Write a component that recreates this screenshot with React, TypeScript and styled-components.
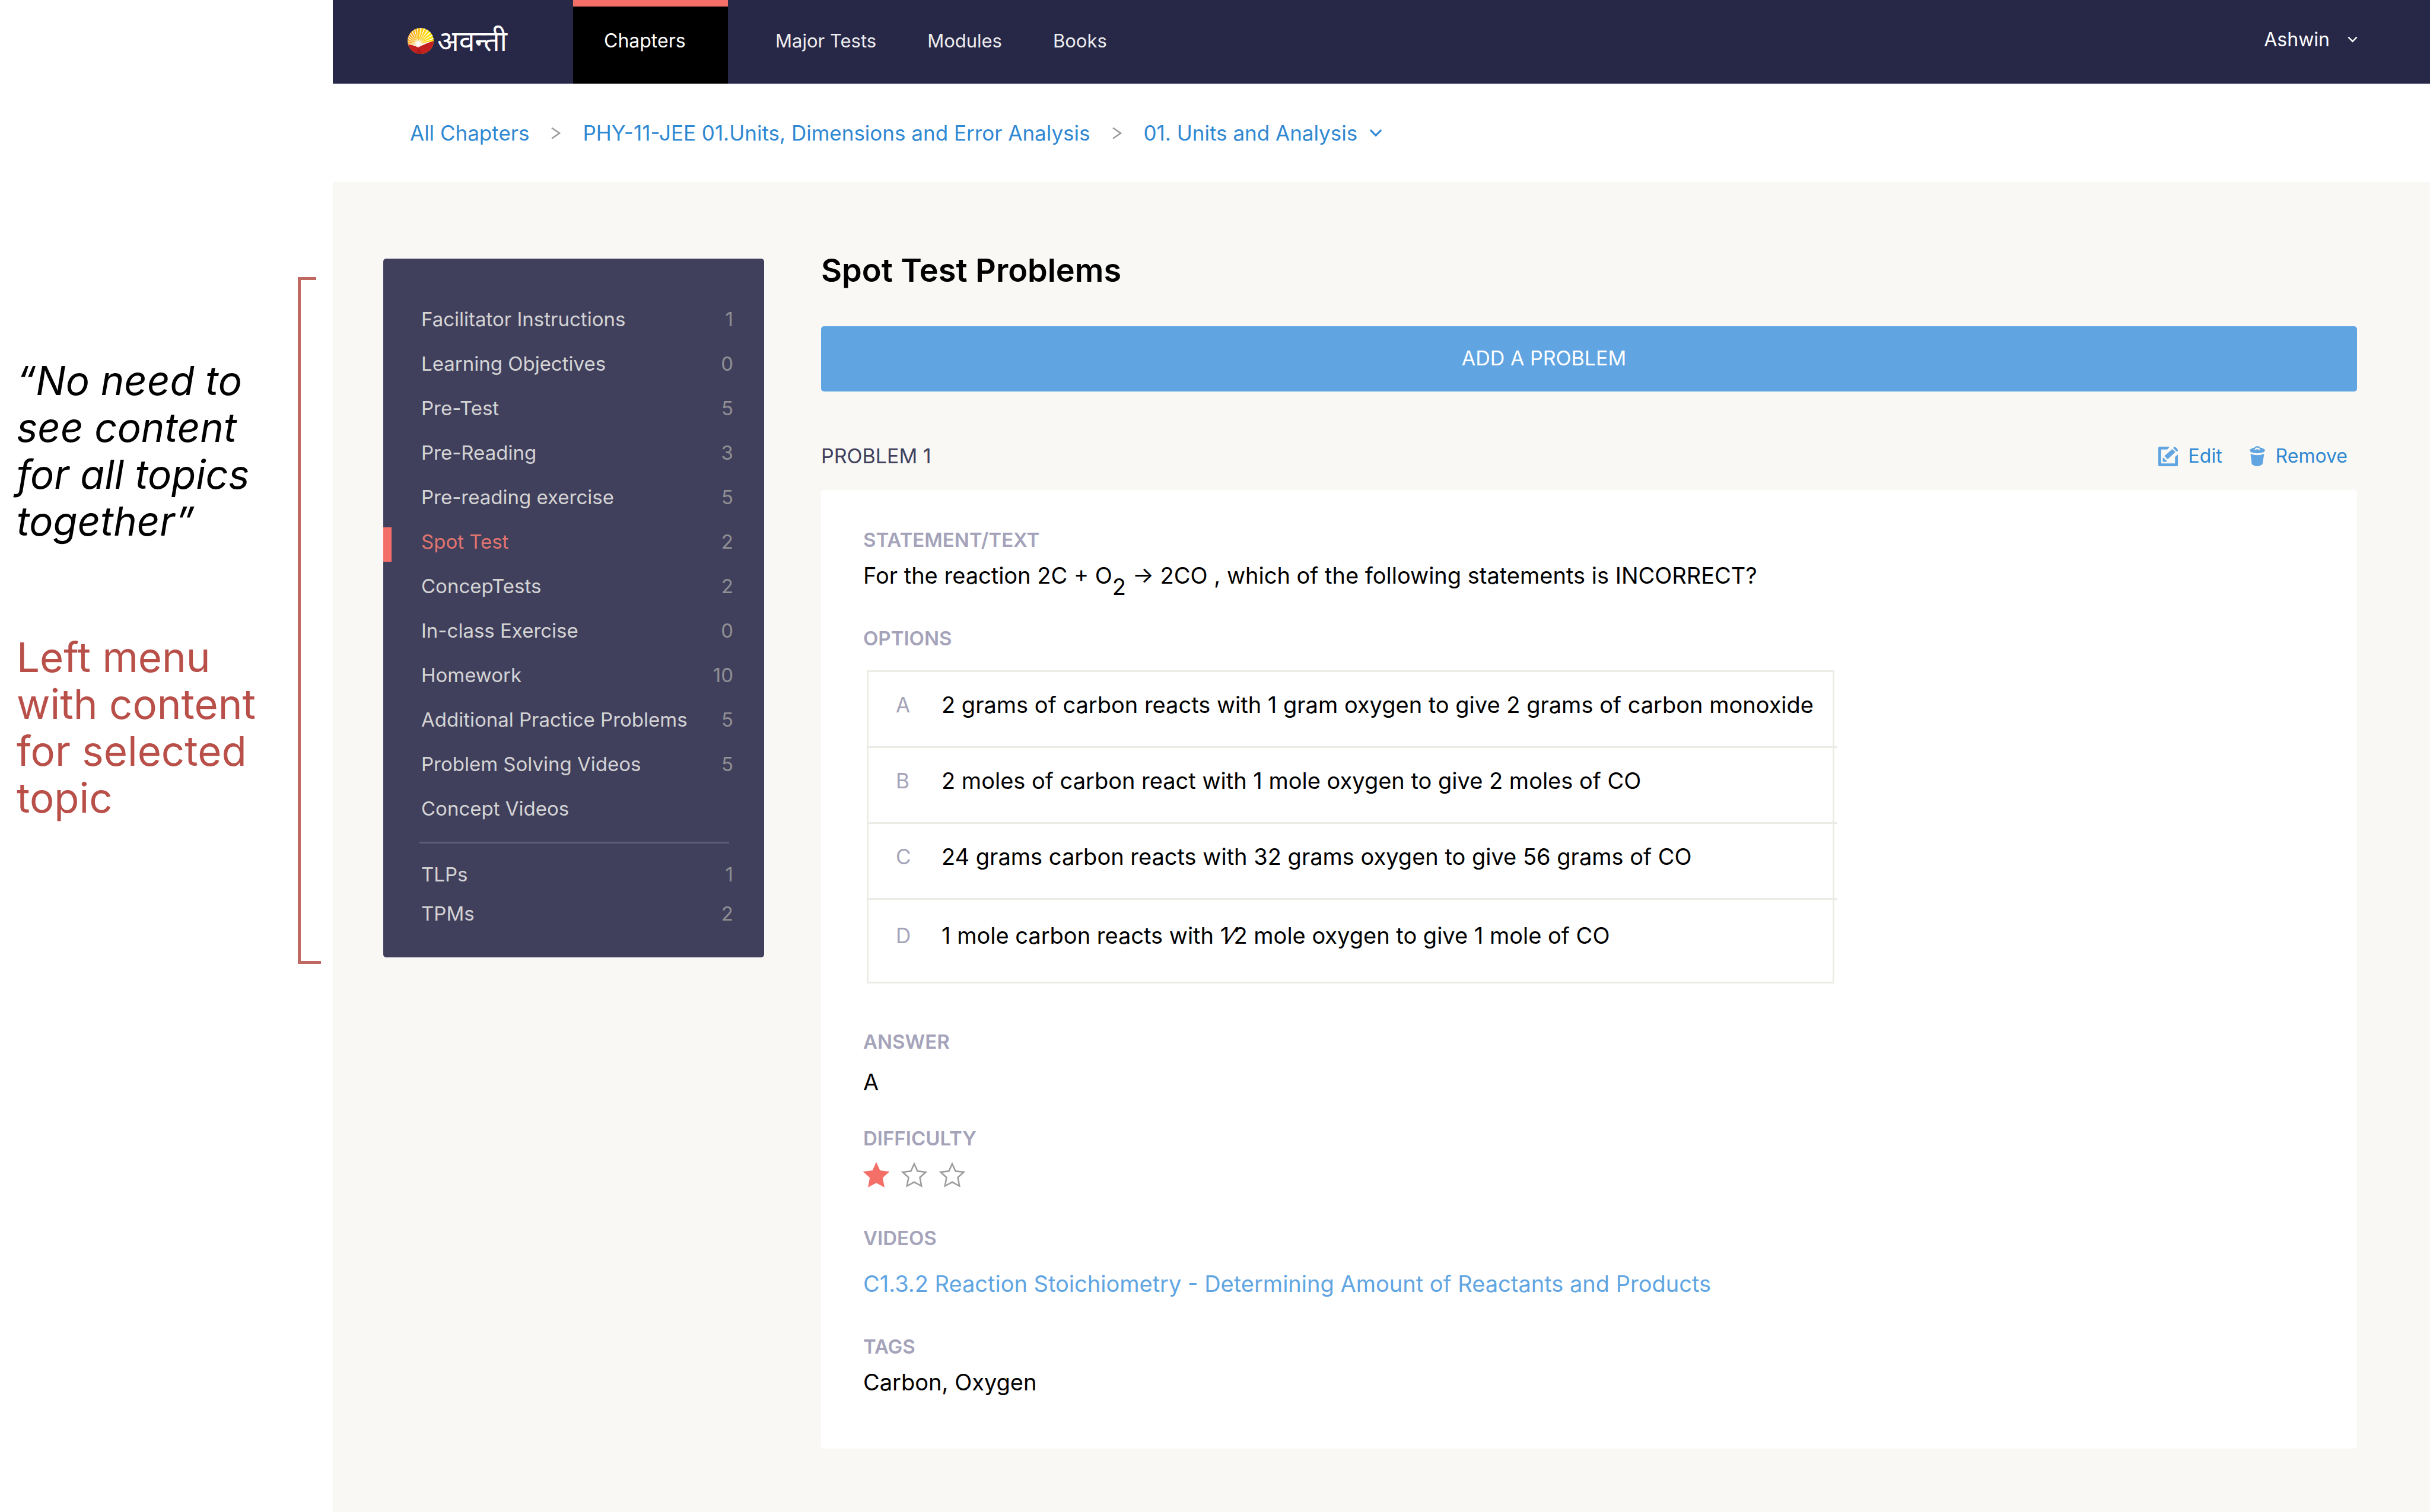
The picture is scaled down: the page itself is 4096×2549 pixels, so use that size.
import React from "react";
import styled, { createGlobalStyle, css } from "styled-components";

const color = {
  navy: "#272748",
  panel: "#40405d",
  canvas: "#f9f8f4",
  coral: "#f56f69",
  link: "#2f88d2",
  sky: "#60a5e2",
  label: "#a4a3ba",
  line: "#ecece7",
  note: "#b94f49",
  bracket: "#c16762",
};

const GlobalStyle = createGlobalStyle`
  *, *::before, *::after { box-sizing: border-box; }
  body {
    margin: 0;
    background: #fff;
    color: #000;
    font-family: Inter, "Noto Sans", sans-serif;
    font-size: 38px;
    line-height: 48px;
  }
  h1, h2, h3, p, ul, ol, dl, dd { margin: 0; padding: 0; }
  ul, ol { list-style: none; }
  a { color: inherit; text-decoration: none; }
  button {
    margin: 0;
    padding: 0;
    border: 0;
    background: none;
    color: inherit;
    font: inherit;
    cursor: pointer;
  }
  svg { display: block; flex: none; }
`;

const Page = styled.div`
  display: grid;
  grid-template-columns: 561px minmax(0, 1fr);
  min-height: 100vh;
`;

/* Annotations beside the screen */

const Notes = styled.aside`
  display: flex;
  justify-content: space-between;
  align-items: flex-start;
  padding: 467px 20px 0 28px;
`;

const NoteText = styled.div`
  display: flex;
  flex-direction: column;
  gap: 151px;
  width: 440px;
  padding-top: 135px;
  font-size: 69px;
  line-height: 79px;
`;

const Quote = styled.p`
  font-size: 67px;
  font-style: italic;
`;

const Remark = styled.p`
  color: ${color.note};
`;

const Bracket = styled.div`
  width: 39px;
  height: 1158px;
  border: solid ${color.bracket};
  border-width: 0 0 5px 5px;

  &::before {
    content: "";
    display: block;
    width: 26px;
    height: 5px;
    background: ${color.bracket};
  }
`;

/* Top bar */

const Screen = styled.div`
  display: flex;
  flex-direction: column;
  background: ${color.canvas};
`;

const TopBar = styled.header`
  display: flex;
  height: 141px;
  padding: 0 122px 0 126px;
  background: ${color.navy};
  color: #fff;
  font-size: 32px;
`;

const Brand = styled.a`
  display: flex;
  align-items: center;
  gap: 6px;
  width: 279px;
  padding-bottom: 4px;
`;

const BrandName = styled.span`
  font-size: 48px;
  line-height: 64px;
`;

const Nav = styled.nav`
  display: flex;
`;

const NavLinks = styled.div`
  display: flex;
  gap: 86px;
  padding-left: 80px;
`;

const NavLink = styled.a<{ $active?: boolean }>`
  display: flex;
  align-items: center;
  padding-bottom: 4px;
  font-size: 31px;
  color: #eeeeee;
  ${(p) =>
    p.$active &&
    css`
      width: 261px;
      padding: 0 0 15px 52px;
      border-top: 11px solid ${color.coral};
      background: #000;
      color: #fff;
      font-size: 32px;
    `}
`;

const UserMenu = styled.button`
  display: flex;
  align-items: center;
  gap: 30px;
  margin-left: auto;
  padding-bottom: 8px;
`;

/* Breadcrumb */

const Crumbs = styled.nav`
  display: flex;
  align-items: center;
  gap: 37px;
  height: 166px;
  padding: 0 130px;
  background: #fff;
  color: ${color.link};
  font-size: 35px;
`;

const CrumbMenu = styled.button`
  display: flex;
  align-items: center;
  gap: 20px;
`;

/* Side menu */

const Body = styled.div`
  display: flex;
  align-items: flex-start;
  gap: 96px;
  padding: 129px 123px 107px 85px;
`;

const Menu = styled.nav`
  flex: none;
  width: 642px;
  padding: 64px 0 41px;
  border-radius: 5px;
  background: ${color.panel};
  color: #d5d4d4;
  font-size: 33px;
`;

const MenuDivider = styled.hr`
  height: 3px;
  margin: 19px 59px 19px 61px;
  border: 0;
  background: #5d5c7b;
`;

const MenuLink = styled.a<{ $active?: boolean; $compact?: boolean }>`
  position: relative;
  display: flex;
  justify-content: space-between;
  align-items: center;
  height: ${(p) => (p.$compact ? 66 : 75)}px;
  padding: 0 52px 0 64px;
  ${(p) =>
    p.$active &&
    css`
      color: #e2756f;

      &::before {
        content: "";
        position: absolute;
        left: 0;
        bottom: 3px;
        width: 14px;
        height: 58px;
        background: ${color.coral};
      }
    `}
`;

const Count = styled.span`
  color: #908f92;
`;

/* Problem area */

const Main = styled.main`
  flex: 1;
  min-width: 0;
`;

const Title = styled.h1`
  height: 114px;
  padding-bottom: 74px;
  font-size: 54px;
  font-weight: 600;
  line-height: 40px;
`;

const AddButton = styled.button`
  width: 100%;
  height: 110px;
  padding: 0 152px 2px 0;
  border-radius: 5px;
  background: ${color.sky};
  color: #fff;
  font-size: 34px;
`;

const ProblemHead = styled.div`
  display: flex;
  justify-content: space-between;
  align-items: center;
  height: 166px;
  padding: 52px 16px 0 0;
`;

const ProblemTitle = styled.h2`
  color: ${color.panel};
  font-size: 34px;
  font-weight: 400;
`;

const Actions = styled.div`
  display: flex;
  gap: 46px;
`;

const Action = styled.button`
  display: flex;
  align-items: center;
  gap: 18px;
  color: ${color.link};
  font-size: 32px;
`;

const Card = styled.article`
  padding: 64px 71px 88px;
  border-radius: 5px;
  background: #fff;
`;

const Field = styled.section<{ $gap: number; $after?: number }>`
  display: flex;
  flex-direction: column;
  align-items: flex-start;
  gap: ${(p) => p.$gap}px;
  margin-bottom: ${(p) => p.$after ?? 0}px;
`;

const Label = styled.h3`
  color: ${color.label};
  font-size: 33px;
  font-weight: 600;
  line-height: 40px;
`;

const Value = styled.p`
  line-height: 48px;
`;

const Subscript = styled.sub`
  font-size: 1em;
  line-height: 0;
  vertical-align: -19px;
`;

const VideoLink = styled.a`
  color: ${color.sky};
`;

const Options = styled.table`
  margin-left: 6px;
  border: 3px solid ${color.line};
  border-spacing: 0;
`;

const OptionRow = styled.tr`
  th,
  td {
    position: relative;
    height: 128px;
    padding: 31px 32px 0 0;
    border-bottom: 3px solid ${color.line};
    text-align: left;
    vertical-align: top;
  }
  td::after {
    content: "";
    position: absolute;
    right: -8px;
    bottom: -3px;
    width: 8px;
    height: 3px;
    background: ${color.line};
  }
  &:last-child th,
  &:last-child td {
    height: 138px;
    padding-top: 36px;
    border-bottom: 0;
  }
  &:last-child td::after {
    content: none;
  }
`;

const OptionKey = styled.th`
  && {
    width: 123px;
    padding-left: 46px;
  }
  color: ${color.label};
  font-size: 35px;
  font-weight: 400;
`;

const OptionText = styled.td`
  font-feature-settings: "frac" 0, "numr" 0, "dnom" 0;
`;

const Stars = styled.div`
  display: flex;
  gap: 20px;
`;

/* Drawings */

const rays = Array.from({ length: 17 }, (_, i) => {
  const a = (Math.PI * (-188 + i * 12)) / 180;
  const at = (t: number) => `${18 + 50 * Math.cos(t)} ${27 + 50 * Math.sin(t)}`;
  return `M18 27L${at(a - 0.035)}L${at(a + 0.035)}Z`;
}).join("");

const SunLogo = () => (
  <svg width="44" height="44" viewBox="0 0 44 44" aria-hidden="true">
    <defs>
      <clipPath id="disc">
        <circle cx="22" cy="22" r="22" />
      </clipPath>
      <linearGradient id="sky">
        <stop offset="0.1" stopColor="#f9a516" />
        <stop offset="0.9" stopColor="#ffe600" />
      </linearGradient>
      <radialGradient id="glow">
        <stop offset="0.3" stopColor="#fff" />
        <stop offset="1" stopColor="#fff" stopOpacity="0" />
      </radialGradient>
    </defs>
    <g clipPath="url(#disc)">
      <rect width="44" height="44" fill="url(#sky)" />
      <path d={rays} fill="#fff" />
      <circle cx="18" cy="27" r="9" fill="url(#glow)" />
      <path d="M0 28Q10 28 18 32Q28 25 44 22V44H0Z" fill="#c4201f" />
      <path d="M0 28Q10 26 18 32Q26 24 44 22Q28 27 18 33Q8 28 0 28Z" fill="#fff" />
      <path d="M18 33L16 44H24Z" fill="#a81a1c" />
    </g>
  </svg>
);

const ChevronDown = ({ width = 17 }: { width?: number }) => (
  <svg width={width} height={width} viewBox="0 0 18 18" fill="none" stroke="currentColor" strokeWidth="2.6" aria-hidden="true">
    <path d="M1.5 5L9 12.5L16.5 5" />
  </svg>
);

const ChevronRight = () => (
  <svg width="16" height="21" viewBox="0 0 16 21" fill="none" stroke="#9b9b9b" strokeWidth="2.5" aria-hidden="true">
    <path d="M1 1.5L14 10.5L1 19.5" />
  </svg>
);

const EditIcon = () => (
  <svg width="33" height="33" viewBox="0 0 48 48" fill={color.sky} aria-hidden="true">
    <path d="M3 0H28L22 7H7V41H41V25L48 19V45Q48 48 45 48H3Q0 48 0 45V3Q0 0 3 0Z" />
    <path d="M34 6L42 13L23 31L15 23Z" />
    <path d="M37 2Q39 0 42 1Q48 5 48 10L45 12L37 4Z" />
    <path d="M12 27L21 35V37H11V28Z" />
  </svg>
);

const TrashIcon = () => (
  <svg width="26" height="34" viewBox="0 0 37 49" fill={color.sky} aria-hidden="true">
    <path d="M0 10Q3 5 11 4Q14 0 18 0Q23 0 26 4Q34 5 37 10Q37 14 30 16Q18 19 7 16Q0 14 0 10Z" />
    <path d="M11 10L14 5Q18 2 23 5L26 10L22 9Q18 6 15 9Z" fill={color.canvas} />
    <path d="M2 19Q18 25 35 19L31 44Q25 49 18 49Q11 49 5 44Z" />
  </svg>
);

const Star = ({ filled }: { filled?: boolean }) => (
  <svg
    width="44"
    height="43"
    viewBox="0 0 44 43"
    fill={filled ? color.coral : "none"}
    stroke={filled ? color.coral : "#9b9b9b"}
    strokeWidth="2.5"
    aria-hidden="true"
  >
    <path d="M22 3L27.5 15.3L41.5 17L31.5 26L34.2 40.5L22 33.8L9.8 40.5L12.5 26L2.5 17L16.5 15.3Z" />
  </svg>
);

/* Data */

const menuItems: [string, number | null][] = [
  ["Facilitator Instructions", 1],
  ["Learning Objectives", 0],
  ["Pre-Test", 5],
  ["Pre-Reading", 3],
  ["Pre-reading exercise", 5],
  ["Spot Test", 2],
  ["ConcepTests", 2],
  ["In-class Exercise", 0],
  ["Homework", 10],
  ["Additional Practice Problems", 5],
  ["Problem Solving Videos", 5],
  ["Concept Videos", null],
];

const planItems: [string, number][] = [
  ["TLPs", 1],
  ["TPMs", 2],
];

const options: [string, string][] = [
  ["A", "2 grams of carbon reacts with 1 gram oxygen to give 2 grams of carbon monoxide"],
  ["B", "2 moles of carbon react with 1 mole oxygen to give 2 moles of CO"],
  ["C", "24 grams carbon reacts with 32 grams oxygen to give 56 grams of CO"],
  ["D", "1 mole carbon reacts with 1⁄2 mole oxygen to give 1 mole of CO"],
];

export default function App() {
  return (
    <>
      <GlobalStyle />
      <Page>
        <Notes>
          <NoteText>
            <Quote>“No need to see content for all topics together”</Quote>
            <Remark>Left menu with content for selected topic</Remark>
          </NoteText>
          <Bracket />
        </Notes>

        <Screen>
          <TopBar>
            <Brand href="#">
              <SunLogo />
              <BrandName lang="hi">अवन्ती</BrandName>
            </Brand>
            <Nav>
              <NavLink href="#chapters" $active>
                Chapters
              </NavLink>
              <NavLinks>
                <NavLink href="#tests">Major Tests</NavLink>
                <NavLink href="#modules">Modules</NavLink>
                <NavLink href="#books">Books</NavLink>
              </NavLinks>
            </Nav>
            <UserMenu type="button">
              Ashwin
              <ChevronDown />
            </UserMenu>
          </TopBar>

          <Crumbs>
            <a href="#chapters">All Chapters</a>
            <ChevronRight />
            <a href="#chapter">PHY-11-JEE 01.Units, Dimensions and Error Analysis</a>
            <ChevronRight />
            <CrumbMenu type="button">
              01. Units and Analysis
              <ChevronDown width={22} />
            </CrumbMenu>
          </Crumbs>

          <Body>
            <Menu>
              <ul>
                {menuItems.map(([name, count]) => (
                  <li key={name}>
                    <MenuLink href="#menu" $active={name === "Spot Test"}>
                      {name}
                      {count !== null && <Count>{count}</Count>}
                    </MenuLink>
                  </li>
                ))}
              </ul>
              <MenuDivider />
              <ul>
                {planItems.map(([name, count]) => (
                  <li key={name}>
                    <MenuLink href="#menu" $compact>
                      {name}
                      <Count>{count}</Count>
                    </MenuLink>
                  </li>
                ))}
              </ul>
            </Menu>

            <Main>
              <Title>Spot Test Problems</Title>
              <AddButton type="button">ADD A PROBLEM</AddButton>

              <ProblemHead>
                <ProblemTitle>PROBLEM 1</ProblemTitle>
                <Actions>
                  <Action type="button">
                    <EditIcon />
                    Edit
                  </Action>
                  <Action type="button">
                    <TrashIcon />
                    Remove
                  </Action>
                </Actions>
              </ProblemHead>

              <Card>
                <Field $gap={16} $after={62}>
                  <Label>STATEMENT/TEXT</Label>
                  <Value>
                    For the reaction 2C + O<Subscript>2</Subscript> → 2CO , which of the following statements is INCORRECT?
                  </Value>
                </Field>

                <Field $gap={34} $after={78}>
                  <Label>OPTIONS</Label>
                  <Options>
                    <tbody>
                      {options.map(([key, text]) => (
                        <OptionRow key={key}>
                          <OptionKey scope="row">{key}</OptionKey>
                          <OptionText>{text}</OptionText>
                        </OptionRow>
                      ))}
                    </tbody>
                  </Options>
                </Field>

                <Field $gap={24} $after={51}>
                  <Label>ANSWER</Label>
                  <Value>A</Value>
                </Field>

                <Field $gap={20} $after={65}>
                  <Label>DIFFICULTY</Label>
                  <Stars role="img" aria-label="1 of 3">
                    <Star filled />
                    <Star />
                    <Star />
                  </Stars>
                </Field>

                <Field $gap={33} $after={62}>
                  <Label>VIDEOS</Label>
                  <VideoLink href="#video">
                    C1.3.2 Reaction Stoichiometry - Determining Amount of Reactants and Products
                  </VideoLink>
                </Field>

                <Field $gap={16}>
                  <Label>TAGS</Label>
                  <Value>Carbon, Oxygen</Value>
                </Field>
              </Card>
            </Main>
          </Body>
        </Screen>
      </Page>
    </>
  );
}
